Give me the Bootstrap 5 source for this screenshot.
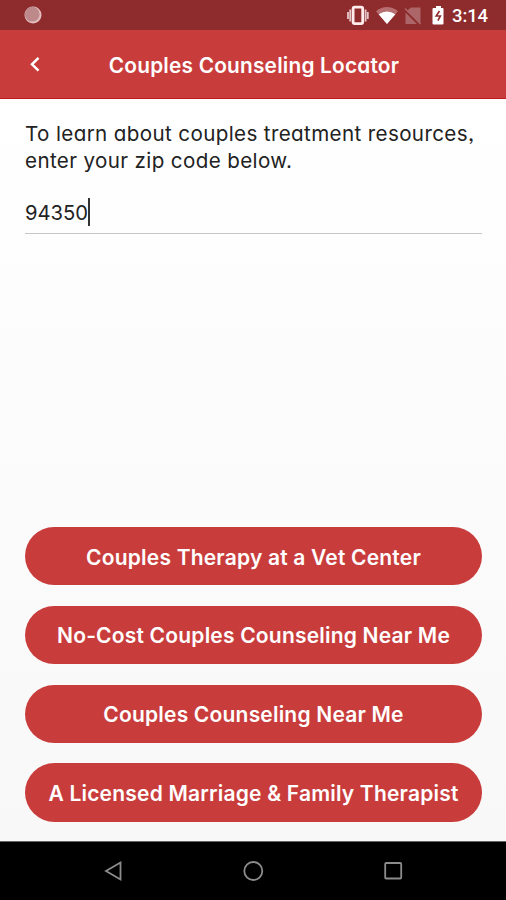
<!DOCTYPE html>
<html lang="en">
<head>
<meta charset="utf-8">
<meta name="viewport" content="width=device-width, initial-scale=1">
<title>Couples Counseling Locator</title>
<link href="https://cdn.jsdelivr.net/npm/bootstrap@5.3.0/dist/css/bootstrap.min.css" rel="stylesheet">
<style>
body{font-family:Inter,"Open Sans",sans-serif;font-feature-settings:"cv11","ss03";color:#222}
.screen{height:900px;overflow:hidden;background:linear-gradient(#fff 98px,#fdfdfd 300px,#f8f8f8 841px)}
.status{height:30px;background:#8e2b2c;padding:0 18px 0 24px}
.clock{font:500 18.5px/28px Roboto,sans-serif;width:36px;letter-spacing:-.1px;padding-top:2px}
.appbar{height:69px;background:#c93c3c;border-bottom:1px solid #bd1a1e;padding:0 25px}
.appbar h1{font-size:20.8px;line-height:28px;font-weight:600;letter-spacing:.22px;padding-top:3px}
.content{padding:21px 24px 19.4px 25px}
.intro{font-size:20.6px;line-height:27px;letter-spacing:.37px}
.zip{height:41px;border-bottom:1px solid #c6c6c6;font-size:20.2px;margin-top:19px;padding-top:5px}
.caret{width:2px;height:28px;background:#333}
.actions{gap:20.5px}
.pill{height:58.3px;background:#c93c3c;font-size:21px;font-weight:600;line-height:28px;padding:3px 0 0;border:0;white-space:nowrap;letter-spacing:.2px}
.pill:hover{background:#b93434}
.sysnav{height:59px;background:#000;border-top:1px solid #666;padding:0 100px}
svg{display:block}
</style>
</head>
<body>
<div class="screen d-flex flex-column">
  <div class="status d-flex align-items-center justify-content-between text-white">
    <svg width="18" height="18" viewBox="0 0 18 18"><circle cx="9" cy="9" r="8.5" fill="#e3bfc0"/><circle cx="8.2" cy="8.2" r="7.4" fill="#bd898a"/></svg>
    <div class="d-flex align-items-center">
      <svg width="107" height="30" viewBox="0 0 107 30">
        <path d="M3 12v7M5.2 9.5v12M22.8 12v7M20.6 9.5v12" stroke="#e4c7c8" stroke-width="1.8"/>
        <rect x="8.1" y="7.2" width="9.6" height="16.4" rx="1.5" fill="none" stroke="#ffecec" stroke-width="2.8"/>
        <path d="M31 11.2Q42 3 53 11.2L42 24Z" fill="#b76e70"/><path d="M33.6 14.2Q42 8.6 50.4 14.2L42 24Z" fill="#fff"/>
        <path d="M66 7.5h9.5V24L62 10.8ZM60.5 12.5v11.5h11.5Z" fill="#ac6668"/><path d="M60 8.5l15.5 15.5" stroke="#ac6668" stroke-width="1.4"/>
        <path d="M91 6h5v2h1.5q1 0 1 1v14.5q0 1-1 1h-9q-1 0-1-1V9q0-1 1-1H91Z" fill="#fff"/><path d="M94.5 11l-3.3 5h4.2l-2.5 4.6" fill="none" stroke="#8e2b2c" stroke-width="1.6"/>
      </svg>
      <span class="clock text-end">3:14</span>
    </div>
  </div>
  <header class="appbar d-flex align-items-center text-white">
    <svg width="18" height="20" viewBox="0 0 18 20"><path d="M13.5 3.9L7 10.3l6.5 6.4" fill="none" stroke="#fff" stroke-width="2.5"/></svg>
    <h1 class="mb-0 flex-grow-1 text-center text-nowrap">Couples Counseling Locator</h1>
    <span class="ps-3"></span>
  </header>
  <main class="content flex-grow-1 d-flex flex-column">
    <p class="intro m-0 text-nowrap">To learn about couples treatment resources,<br>enter your zip code below.</p>
    <div class="zip d-flex align-items-start"><span>94350</span><span class="caret"></span></div>
    <div class="actions d-grid mt-auto">
      <button class="btn pill rounded-pill text-white" type="button">Couples Therapy at a Vet Center</button>
      <button class="btn pill rounded-pill text-white" type="button">No-Cost Couples Counseling Near Me</button>
      <button class="btn pill rounded-pill text-white" type="button">Couples Counseling Near Me</button>
      <button class="btn pill rounded-pill text-white" type="button">A Licensed Marriage &amp; Family Therapist</button>
    </div>
  </main>
  <nav class="sysnav d-flex align-items-center justify-content-between">
    <svg width="26" height="26" viewBox="0 0 26 26"><path d="M20.5 4.5v17L6 13Z" fill="none" stroke="#8c8c8c" stroke-width="1.8"/></svg>
    <svg width="26" height="26" viewBox="0 0 26 26"><circle cx="13.3" cy="13" r="9" fill="none" stroke="#8c8c8c" stroke-width="1.8"/></svg>
    <svg width="26" height="26" viewBox="0 0 26 26"><rect x="5.2" y="5" width="16" height="15.5" rx="1" fill="none" stroke="#8c8c8c" stroke-width="1.8"/></svg>
  </nav>
</div>
<script src="https://cdn.jsdelivr.net/npm/bootstrap@5.3.0/dist/js/bootstrap.bundle.min.js"></script>
</body>
</html>
